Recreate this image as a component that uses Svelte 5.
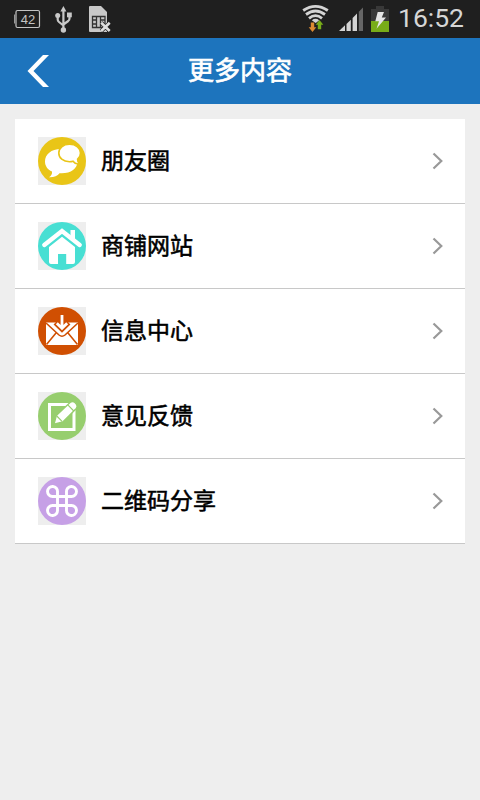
<script>
	const items = [
		{ icon: 'chat', color: '#e9c517', label: '朋友圈' },
		{ icon: 'home', color: '#48dfd3', label: '商铺网站' },
		{ icon: 'mail', color: '#d04f02', label: '信息中心' },
		{ icon: 'edit', color: '#97ce6e', label: '意见反馈' },
		{ icon: 'command', color: '#c6a0e6', label: '二维码分享' }
	];
</script>

<div class="screen">
	<div class="status">
		<svg class="left" width="120" height="38" viewBox="0 0 120 38">
			<rect x="16" y="10.5" width="23.5" height="17" rx="1.5" fill="none" stroke="#c4c4c4" stroke-width="1.2" />
			<path d="M14.5 14.5V23.5" stroke="#999" />
			<text x="28" y="24" text-anchor="middle" class="level">42</text>
			<g fill="none" stroke="#c8c8c8" stroke-width="2.2">
				<path d="M63.4 9V29M57.7 16V19.5Q57.7 21 59 22L63.4 25.5M69.5 15V18.5Q69.5 20 68.2 21L63.4 24.5" />
			</g>
			<g fill="#c8c8c8">
				<path d="M63.4 6L66.4 11.5H60.4Z" />
				<circle cx="63.4" cy="30" r="2.7" />
				<circle cx="57.7" cy="15.5" r="2.5" />
				<rect x="67" y="12.5" width="4.8" height="4.8" />
			</g>
			<path d="M90 6H101L107 12V32H90Q89 32 89 31V7Q89 6 90 6Z" fill="#c8c8c8" />
			<path
				d="M92.5 16.5H105V27.5H92.5ZM96.5 16.5V27.5M100.5 16.5V27.5M92.5 20H96.5M92.5 24H96.5M100.5 20H105M100.5 24H105"
				fill="none"
				stroke="#333"
				stroke-width="1.3"
			/>
			<path d="M101.2 22.7L109.7 31M109.7 22.7L101.2 31" stroke="#222" stroke-width="4" />
			<path d="M101.2 22.7L109.7 31M109.7 22.7L101.2 31" stroke="#dedede" stroke-width="2.6" />
		</svg>

		<svg width="95" height="38" viewBox="300 0 95 38">
			<g fill="none" stroke="#d4d4d4" stroke-width="2.8">
				<path d="M303.2 10.5Q315.5 2.2 327.8 10.5" />
				<path d="M306 14.5Q315.5 7.5 325 14.5" />
				<path d="M309 18.3Q315.5 13 322 18.3" />
			</g>
			<path d="M311.8 20.2Q315.5 17.4 319.2 20.2L315.7 23Z" fill="#d4d4d4" />
			<path d="M310.8 22.5H314.2V27.3H316.3L312.5 32L308.7 27.3H310.8Z" fill="#dc8a32" />
			<path d="M317.8 29.3H321.2V24.7H323.3L319.5 20L315.7 24.7H317.8Z" fill="#78ad19" />

			<g fill="#d4d4d4">
				<path d="M339 31L345 25.2V31Z" />
				<path d="M346.5 24L350.8 19.7V31H346.5Z" />
				<path d="M352.6 18L357 13.6V31H352.6Z" />
			</g>
			<path d="M358.8 11.8L363 7.4V31H358.8Z" fill="#666" />

			<path d="M376 6H384V9H389V21H371V9H376Z" fill="#393939" />
			<rect x="371" y="21" width="18" height="11" fill="#78ac18" />
			<path d="M377.7 12H384L381.8 17.5H386L376.5 28.8L379 21.3H375.3Z" fill="#e5e5e5" />
		</svg>
		<span class="time">16:52</span>
	</div>

	<header>
		<svg class="back" width="24" height="34" viewBox="0 0 24 34">
			<path d="M16 1H22L6.5 17L22 33H16L0.5 17Z" fill="#fff" />
		</svg>
		<h1>更多内容</h1>
	</header>

	<ul>
		{#each items as item}
			<li>
				<svg class="icon" width="48" height="48" viewBox="0 0 48 48">
					<circle cx="24" cy="24" r="24" fill={item.color} />
					{#if item.icon === 'chat'}
						<path
							d="M23 12C13 12 7 17.5 7 24.5C7 29 9.5 32.5 14 34.5C14.5 37 13 39 11 40.3C16 40.5 19.5 38.8 21.5 36.2C32 37 39.5 32 39.5 24.5C39.5 17 33 12 23 12Z"
							fill="#fff"
						/>
						<path
							d="M31.5 7.3C25 7.3 20.8 11 20.8 16C20.8 21 25 24.7 31.5 24.7C33 24.7 34 24.5 35 24.2C36.5 26.3 38.7 27.3 41.5 26.8C40 25.5 39.5 24 39.6 22.2C41.5 20.7 42.5 18.5 42.5 16C42.5 11 38 7.3 31.5 7.3Z"
							fill="#fff"
							stroke={item.color}
							stroke-width="1.6"
						/>
					{:else if item.icon === 'home'}
						<path d="M32.5 8H37V18L32.5 14Z" fill="#fff" />
						<path
							d="M6.3 23L24 9L41.7 23"
							fill="none"
							stroke="#fff"
							stroke-width="4.4"
							stroke-linecap="round"
						/>
						<path
							d="M24 14.8L37 25V40Q37 42 35 42H28.2V32H20V42H13Q11 42 11 40V25Z"
							fill="#fff"
						/>
					{:else if item.icon === 'mail'}
						<path d="M8 15.5H40V38H8Z" fill="#fff" />
						<path
							d="M8 16L21 28Q24 30.5 27 28L40 16M8.5 37.5L18 26M39.5 37.5L30 26"
							fill="none"
							stroke={item.color}
							stroke-width="1.6"
						/>
						<path
							d="M24 9V20M17.8 15.2L24 21.3L30.2 15.2"
							fill="none"
							stroke={item.color}
							stroke-width="6.4"
						/>
						<path
							d="M24 8V21M18.8 16.2L24 21.3L29.2 16.2"
							fill="none"
							stroke="#fff"
							stroke-width="2.8"
						/>
					{:else if item.icon === 'edit'}
						<path d="M11.5 12.5H36V37.5H11.5Z" fill="none" stroke="#fff" stroke-width="3" />
						<path
							d="M16 32.3L18.3 23.5L32.3 10.2Q34.8 8.5 37 10.5L38.5 12.3Q40 14.3 38.3 16.5L24.8 30Z"
							fill="#fff"
							stroke={item.color}
							stroke-width="1.4"
						/>
						<path
							d="M29.8 12.8L35.8 19M18.8 24L24.3 29.7"
							fill="none"
							stroke={item.color}
							stroke-width="1.1"
						/>
					{:else}
						<path
							d="M19.5 19.5V15A5 5 0 1 0 14.5 19.5H33.5A5 5 0 1 0 28.5 15V33A5 5 0 1 0 33.5 28.5H14.5A5 5 0 1 0 19.5 33Z"
							fill="none"
							stroke="#fff"
							stroke-width="2.9"
						/>
					{/if}
				</svg>
				<span class="label">{item.label}</span>
				<svg class="arrow" width="12" height="18" viewBox="0 0 12 18">
					<path d="M1.5 1.5L9.3 9L1.5 16.5" fill="none" stroke="#999" stroke-width="2.2" />
				</svg>
			</li>
		{/each}
	</ul>
</div>

<style>
	:global(body) {
		margin: 0;
		background: #eee;
	}

	.screen {
		height: 800px;
		background: #eee;
		font-family: 'Noto Sans CJK SC', sans-serif;
	}

	.status {
		display: flex;
		align-items: center;
		height: 38px;
		background: #1f1f1f;
	}

	.left {
		margin-right: auto;
	}

	.level {
		font: 13px 'Liberation Sans', sans-serif;
		fill: #c4c4c4;
	}

	.time {
		width: 82px;
		margin-left: 3px;
		padding-bottom: 2px;
		font: 26.5px/36px Roboto, sans-serif;
		color: #d6d6d6;
	}

	header {
		display: grid;
		grid-template-columns: 60px 1fr 60px;
		align-items: center;
		height: 66px;
		background: #1d74bd;
	}

	.back {
		margin-left: 27px;
	}

	h1 {
		margin: 0;
		padding-bottom: 4px;
		font-size: 26px;
		line-height: 62px;
		font-weight: 400;
		text-align: center;
		color: #fff;
		-webkit-text-stroke: 0.7px #fff;
	}

	ul {
		margin: 15px 15px 0;
		padding: 0;
		list-style: none;
		background: #fff;
	}

	li {
		display: flex;
		align-items: center;
		box-sizing: border-box;
		height: 85px;
		padding: 0 21px 0 23px;
		border-bottom: 1px solid #c8c8c8;
	}

	.icon {
		background: #eee;
	}

	.label {
		flex: 1;
		margin-left: 15px;
		padding-bottom: 4px;
		font-size: 23px;
		line-height: 80px;
		color: #000;
		-webkit-text-stroke: 0.55px #000;
	}
</style>
